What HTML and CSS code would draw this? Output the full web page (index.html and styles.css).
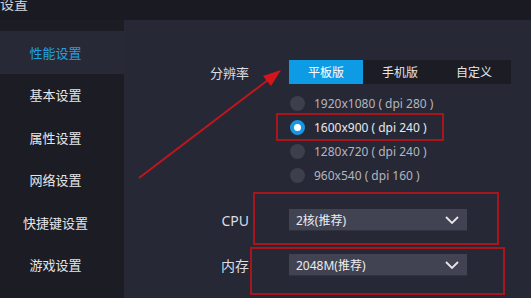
FILE: index.html
```html
<!DOCTYPE html>
<html lang="zh-CN">
<head>
    <meta charset="UTF-8">
    <title>设置</title>
    <link rel="stylesheet" href="styles.css">
</head>
<body>
    <div class="window">
        <div class="titlebar"><span class="title">设置</span></div>

        <div class="main">
            <!-- Left menu -->
            <ul class="sidebar">
                <li class="menu-item active">性能设置</li>
                <li class="menu-item">基本设置</li>
                <li class="menu-item">属性设置</li>
                <li class="menu-item">网络设置</li>
                <li class="menu-item">快捷键设置</li>
                <li class="menu-item">游戏设置</li>
            </ul>

            <!-- Settings panel -->
            <div class="panel">
                <div class="row row-res">
                    <span class="label">分辨率</span>
                    <div class="tabs">
                        <span class="tab active">平板版</span>
                        <span class="tab">手机版</span>
                        <span class="tab">自定义</span>
                    </div>
                </div>

                <ul class="options">
                    <li class="option"><span class="radio"></span>1920x1080 ( dpi 280 )</li>
                    <li class="option checked"><span class="radio"></span>1600x900 ( dpi 240 )</li>
                    <li class="option"><span class="radio"></span>1280x720 ( dpi 240 )</li>
                    <li class="option"><span class="radio"></span>960x540 ( dpi 160 )</li>
                </ul>

                <div class="row row-cpu">
                    <span class="label label-lg">CPU</span>
                    <div class="select">
                        <span>2核(推荐)</span>
                        <svg class="chevron" width="14" height="8" viewBox="0 0 14 8"><polyline points="1,1 7,7 13,1" fill="none" stroke="#e6e6ea" stroke-width="1.8"/></svg>
                    </div>
                </div>

                <div class="row row-mem">
                    <span class="label label-lg">内存</span>
                    <div class="select">
                        <span>2048M(推荐)</span>
                        <svg class="chevron" width="14" height="8" viewBox="0 0 14 8"><polyline points="1,1 7,7 13,1" fill="none" stroke="#e6e6ea" stroke-width="1.8"/></svg>
                    </div>
                </div>
            </div>
        </div>

        <!-- Red annotations drawn over the screenshot -->
        <div class="mark mark-res"></div>
        <div class="mark mark-cpu"></div>
        <div class="mark mark-mem"></div>
        <svg class="arrow" width="531" height="298" viewBox="0 0 531 298">
            <line x1="139" y1="178" x2="268" y2="80" stroke="#c0161c" stroke-width="2"/>
            <polygon points="281,70 263,76 271,86" fill="#d4161c"/>
        </svg>
    </div>
</body>
</html>
```

FILE: styles.css
```css
body {
    margin: 0;
    background-color: #262836;
    font-family: "Noto Sans", "Noto Sans CJK SC", sans-serif;
    color: #dcdce0;
}
ul {
    margin: 0;
    padding: 0;
    list-style: none;
}
.window {
    position: relative;
    width: 531px;
    height: 298px;
    overflow: hidden;
    background-color: #262836;
}
.titlebar {
    height: 20px;
    background-color: #1a1b22;
    overflow: hidden;
}
.title {
    display: block;
    font-size: 14px;
    line-height: 14px;
    margin-top: -3px;
    color: #d6d6da;
}
.main {
    display: flex;
    height: 278px;
}
.sidebar {
    width: 124px;
    flex-shrink: 0;
    padding-top: 11px;
    background-color: #1c1d24;
}
.menu-item {
    height: 42.5px;
    display: flex;
    align-items: center;
    justify-content: center;
    padding-right: 13px;
    font-size: 13px;
    color: #e6e6ea;
}
.menu-item.active {
    background-color: #272937;
    color: #23a0e2;
}
.panel {
    flex: 1;
    padding-top: 40px;
}
.row {
    display: flex;
    align-items: center;
}
.label {
    width: 125px;
    margin-right: 40px;
    text-align: right;
    font-size: 13px;
    color: #dcdce0;
}
.label-lg {
    font-size: 14px;
}
.tabs {
    display: flex;
    background-color: #1b1c24;
}
.tab {
    width: 74px;
    height: 24px;
    display: flex;
    align-items: center;
    justify-content: center;
    font-size: 12px;
    color: #e6e6ea;
}
.tab.active {
    background-color: #0e9be6;
    color: #ffffff;
}
.options {
    margin-top: 7px;
    padding-left: 166px;
}
.option {
    height: 24px;
    display: flex;
    align-items: center;
    font-size: 12px;
    color: #b4b5be;
}
.radio {
    width: 15px;
    height: 15px;
    border-radius: 50%;
    background-color: #3d3f4b;
    margin-right: 9px;
    box-sizing: border-box;
}
.option.checked {
    color: #e8e8ec;
}
.option.checked .radio {
    background-color: #ffffff;
    border: 4px solid #1797e3;
}
.row-cpu {
    margin-top: 22px;
}
.row-mem {
    margin-top: 23px;
}
.select {
    width: 178px;
    height: 22px;
    box-sizing: border-box;
    display: flex;
    align-items: center;
    justify-content: space-between;
    padding: 0 8px 0 7px;
    background-color: #414352;
    border-bottom: 1px solid #30323e;
    font-size: 12px;
    color: #ececf0;
}
.mark {
    position: absolute;
    border: 2px solid #a8161d;
    box-sizing: border-box;
}
.mark-res {
    left: 276px;
    top: 113px;
    width: 168px;
    height: 28px;
}
.mark-cpu {
    left: 253px;
    top: 192px;
    width: 246px;
    height: 53px;
}
.mark-mem {
    left: 250px;
    top: 247px;
    width: 255px;
    height: 48px;
}
.arrow {
    position: absolute;
    left: 0;
    top: 0;
}
```
